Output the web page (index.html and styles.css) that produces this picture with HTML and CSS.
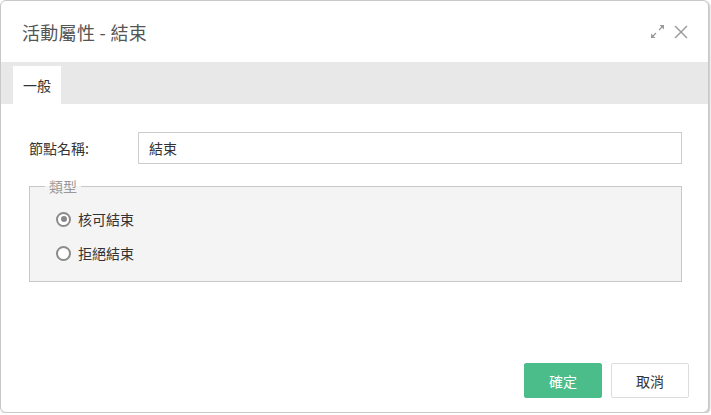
FILE: index.html
```html
<!DOCTYPE html>
<html lang="zh-Hant">
<head>
  <meta charset="UTF-8">
  <meta name="viewport" content="width=device-width, initial-scale=1.0">
  <title>活動屬性 - 結束</title>
  <link rel="stylesheet" href="styles.css">
</head>
<body>

  <div class="dialog">
    <div class="dialog-header">
      <h2 class="dialog-title">活動屬性 - 結束</h2>
      <div class="dialog-tools">
        <svg class="tool-icon" width="15" height="15" viewBox="0 0 15 15">
          <line x1="3" y1="12" x2="6" y2="9" stroke="#9a9a9a" stroke-width="1.3"/>
          <polygon points="1,14 1,9.5 5.5,14" fill="#9a9a9a"/>
          <line x1="12" y1="3" x2="9" y2="6" stroke="#9a9a9a" stroke-width="1.3"/>
          <polygon points="14,1 14,5.5 9.5,1" fill="#9a9a9a"/>
        </svg>
        <svg class="tool-icon" width="14" height="14" viewBox="0 0 14 14">
          <line x1="1" y1="1" x2="13" y2="13" stroke="#9a9a9a" stroke-width="1.4"/>
          <line x1="13" y1="1" x2="1" y2="13" stroke="#9a9a9a" stroke-width="1.4"/>
        </svg>
      </div>
    </div>

    <div class="tab-bar">
      <div class="tab active">一般</div>
    </div>

    <div class="dialog-body">
      <div class="form-row">
        <label for="nodeName">節點名稱:</label>
        <input type="text" id="nodeName" value="結束">
      </div>

      <fieldset class="type-box">
        <legend>類型</legend>
        <div class="radio-item">
          <span class="radio checked"></span>
          <span>核可結束</span>
        </div>
        <div class="radio-item">
          <span class="radio"></span>
          <span>拒絕結束</span>
        </div>
      </fieldset>
    </div>

    <div class="dialog-footer">
      <button class="btn btn-primary">確定</button>
      <button class="btn">取消</button>
    </div>
  </div>

</body>
</html>
```

FILE: styles.css
```css
body {
  margin: 0;
  background: #fff;
  font-family: "Noto Sans CJK TC", "Noto Sans", sans-serif;
  color: #333;
}
.dialog {
  width: 707px;
  height: 411px;
  border: 1px solid #c8c8c8;
  border-radius: 6px;
  box-shadow: 1px 1px 2px rgba(0, 0, 0, 0.25);
  display: flex;
  flex-direction: column;
  overflow: hidden;
  background: #fff;
}
.dialog-header {
  height: 61px;
  padding: 0 22px 0 21px;
  display: flex;
  align-items: center;
  justify-content: space-between;
}
.dialog-title {
  margin: 0;
  font-size: 18px;
  font-weight: normal;
  color: #555;
  letter-spacing: 0.3px;
}
.dialog-tools {
  display: flex;
  align-items: center;
  gap: 9px;
  margin-right: -2px;
}
.tool-icon {
  display: block;
}
.tab-bar {
  height: 42px;
  background: #e8e8e8;
  padding-left: 12px;
  display: flex;
  align-items: flex-end;
}
.tab {
  width: 48px;
  height: 38px;
  line-height: 38px;
  text-align: center;
  font-size: 14px;
  color: #333;
}
.tab.active {
  background: #fff;
}
.dialog-body {
  padding: 28px 26px 0 28px;
}
.form-row {
  display: flex;
  align-items: center;
}
.form-row label {
  width: 109px;
  font-size: 14px;
  color: #333;
}
.form-row input {
  flex: 1;
  height: 32px;
  box-sizing: border-box;
  border: 1px solid #ccc;
  padding: 0 10px;
  font-family: inherit;
  font-size: 14px;
  color: #333;
}
.type-box {
  margin: 12px 0 0 0;
  height: 106px;
  box-sizing: border-box;
  border: 1px solid #c8c8c8;
  background: #f4f4f4;
  padding: 6px 14px 0 26px;
}
.type-box legend {
  padding: 0 4px;
  margin-left: -11px;
  font-size: 14px;
  line-height: 20px;
  color: #999;
}
.radio-item {
  display: flex;
  align-items: center;
  gap: 7px;
  height: 34px;
  font-size: 14px;
  color: #333;
}
.radio {
  width: 15px;
  height: 15px;
  box-sizing: border-box;
  border: 2px solid #8c8c8c;
  border-radius: 50%;
  background: #fff;
  display: flex;
  align-items: center;
  justify-content: center;
}
.radio.checked::after {
  content: "";
  width: 6px;
  height: 6px;
  border-radius: 50%;
  background: #888;
}
.dialog-footer {
  margin-top: auto;
  padding: 0 19px 14px 0;
  display: flex;
  justify-content: flex-end;
  gap: 9px;
}
.btn {
  width: 78px;
  height: 35px;
  border: 1px solid #ddd;
  border-radius: 2px;
  background: #fff;
  font-family: inherit;
  font-size: 14px;
  color: #333;
  cursor: pointer;
}
.btn-primary {
  background: #4bbd8a;
  border-color: #4bbd8a;
  color: #fff;
}
```
